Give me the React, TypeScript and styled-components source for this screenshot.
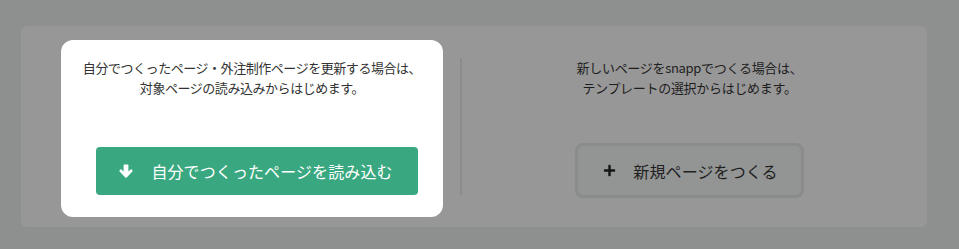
import styled, { createGlobalStyle } from "styled-components";
import { FaPlus } from "react-icons/fa";

const GlobalStyle = createGlobalStyle`
  html, body {
    margin: 0;
    padding: 0;
    background: #8e8f8f;
    font-family: "Noto Sans CJK JP", "Noto Sans", sans-serif;
  }
`;

const Page = styled.div`
  width: 959px;
  height: 249px;
  padding: 26px 32px 0 21px;
  box-sizing: border-box;
`;

const Panel = styled.div`
  display: flex;
  align-items: stretch;
  height: 201px;
  padding: 14px 27px 10px 40px;
  box-sizing: border-box;
  background: #979797;
  border-radius: 6px;
`;

const Spotlight = styled.div`
  width: 382px;
  flex: none;
  background: #ffffff;
  border-radius: 12px;
  padding: 18px 0 0;
  box-sizing: border-box;
`;

const Column = styled.div`
  flex: 1;
  padding-top: 18px;
`;

const Divider = styled.div`
  width: 2px;
  margin: 18px 17px 22px 17px;
  background: #8b8b8b;
`;

const Lead = styled.p<{ $dim?: boolean }>`
  margin: 0;
  text-align: center;
  font-size: 13px;
  line-height: 20px;
  color: ${(p) => (p.$dim ? "#1e1e1e" : "#333333")};
  letter-spacing: ${(p) => (p.$dim ? "-0.3px" : "-0.45px")};
`;

const PrimaryButton = styled.button`
  display: flex;
  align-items: center;
  justify-content: center;
  gap: 18px;
  width: 322px;
  height: 48px;
  margin: 49px 0 0 35px;
  padding: 0 2px 0 0;
  border: none;
  border-radius: 4px;
  background: #39a880;
  color: #ffffff;
  font-family: inherit;
  font-size: 16px;
  letter-spacing: 0.1px;
`;

const GhostButton = styled.button`
  display: flex;
  align-items: center;
  justify-content: center;
  gap: 17px;
  width: 229px;
  height: 55px;
  margin: 45px auto 0;
  padding: 0 0 0 2px;
  border: 3px solid #8a8b8b;
  border-radius: 8px;
  background: #939494;
  color: #1f1f1f;
  font-family: inherit;
  font-size: 16px;
  letter-spacing: 0.1px;
  box-sizing: border-box;

  svg {
    width: 13px;
    height: 13px;
    color: #151515;
  }
`;

const ArrowDown = () => (
  <svg width="14" height="15" viewBox="0 0 14 15" aria-hidden>
    <path
      d="M4.6 1.2Q4.6 0.4 5.4 0.4H8.6Q9.4 0.4 9.4 1.2V7.6L11.6 5.6Q12.2 5.1 12.8 5.6L13.4 6.3Q13.9 6.9 13.4 7.5L7.7 13.4Q7 14 6.3 13.4L0.6 7.5Q0.1 6.9 0.6 6.3L1.2 5.6Q1.8 5.1 2.4 5.6L4.6 7.6Z"
      fill="#ffffff"
    />
  </svg>
);

export default function App() {
  return (
    <>
      <GlobalStyle />
      <Page>
        <Panel>
          <Spotlight>
            <Lead>
              自分でつくったページ・外注制作ページを更新する場合は、
              <br />
              対象ページの読み込みからはじめます。
            </Lead>
            <PrimaryButton>
              <ArrowDown />
              自分でつくったページを読み込む
            </PrimaryButton>
          </Spotlight>
          <Divider />
          <Column>
            <Lead $dim>
              新しいページをsnappでつくる場合は、
              <br />
              テンプレートの選択からはじめます。
            </Lead>
            <GhostButton>
              <FaPlus />
              新規ページをつくる
            </GhostButton>
          </Column>
        </Panel>
      </Page>
    </>
  );
}
